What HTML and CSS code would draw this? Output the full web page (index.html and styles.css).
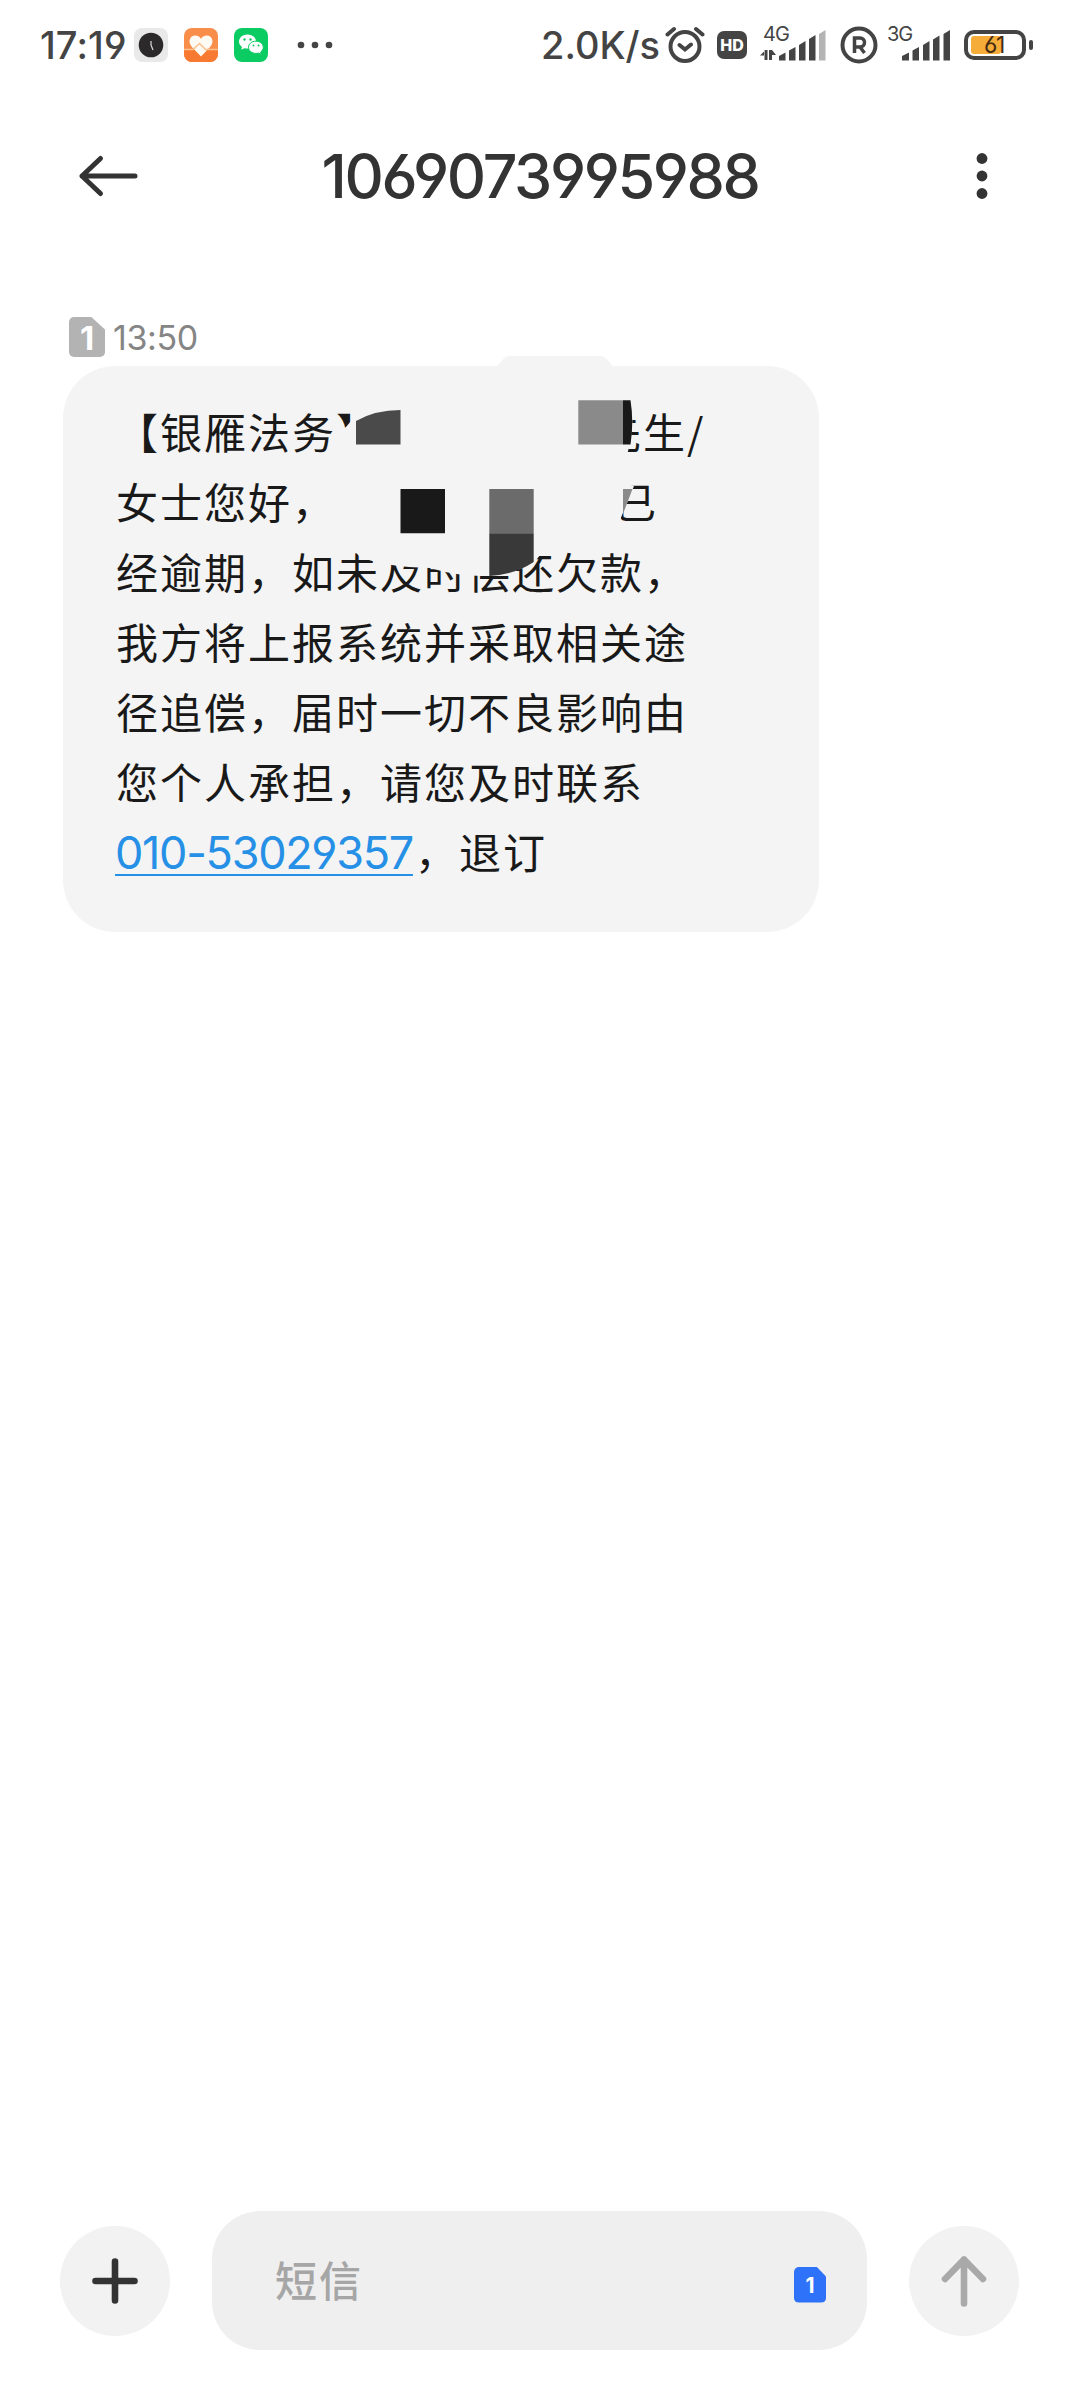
FILE: index.html
```html
<!DOCTYPE html>
<html lang="zh-CN">
<head>
    <meta charset="UTF-8">
    <title>短信</title>
    <link rel="stylesheet" href="styles.css">
</head>
<body>
    <div class="status-bar">
        <div class="status-left">
            <span class="clock">17:19</span>
            <svg class="app-icon" width="34" height="34" viewBox="0 0 34 34">
                <rect width="34" height="34" rx="8" fill="#e9e9e9"/>
                <circle cx="17" cy="17" r="12.3" fill="#2b2929"/>
                <path d="M17 13v4l2 5" stroke="#ddd" stroke-width="1.200" fill="none"/>
            </svg>
            <svg class="app-icon" width="34" height="34" viewBox="0 0 34 34">
                <rect width="34" height="34" rx="8" fill="#f98d4a"/>
                <path d="M0 21.500h34V26a8 8 0 0 1-8 8H8a8 8 0 0 1-8-8z" fill="#f87a32"/>
                <path d="M17 28.500L7.500 18.500C3.500 13.500 6 7.500 11 7.500c3 0 5 1.500 6 3.500 1-2 3-3.500 6-3.500 5 0 7.500 6 3.500 11z" fill="#fffaf3"/>
                <path d="M0 21.500h9l6.500-6 6 6H34" stroke="#fbc08f" stroke-width="1.500" fill="none"/>
            </svg>
            <svg class="app-icon" width="34" height="34" viewBox="0 0 34 34">
                <rect width="34" height="34" rx="8" fill="#0bcb63"/>
                <path d="M13.500 6.500C8.500 6.500 5 9.800 5 13.600c0 2.300 1.200 4.200 3 5.400l-.8 2.800 3.200-1.600c1 .3 2 .4 3.100.4 4.800 0 8.500-3 8.500-7s-3.700-7.100-8.500-7.100z" fill="#fff"/>
                <path d="M22 13.200c-4.300 0-7.500 2.700-7.500 6.100s3.200 6.100 7.500 6.100c.9 0 1.800-.1 2.600-.4l2.600 1.500-.6-2.500c1.700-1.200 2.700-2.800 2.700-4.700 0-3.400-3-6.100-7.300-6.100z" fill="#fff" stroke="#0bcb63"/>
                <g fill="#0bcb63">
                    <circle cx="10.500" cy="11.500" r="1.200"/><circle cx="16.500" cy="11.500" r="1.200"/>
                    <circle cx="19.500" cy="17.500" r="1"/><circle cx="24.500" cy="17.500" r="1"/>
                </g>
            </svg>
            <svg class="more-apps" width="36" height="8" viewBox="0 0 36 8" fill="#444">
                <circle cx="4" cy="4" r="3.300"/><circle cx="18" cy="4" r="3.300"/><circle cx="32" cy="4" r="3.300"/>
            </svg>
        </div>
        <div class="status-right">
            <span class="speed">2.0K/s</span>
            <svg class="alarm" width="40" height="38" viewBox="0 0 40 38" fill="none" stroke="#444" stroke-width="4" stroke-linecap="round">
                <circle cx="20" cy="20.500" r="14.500"/>
                <path d="M2.500 8.500L9 3M37.500 8.500L31 3M14.500 19l5.500 4.500 6-5"/>
            </svg>
            <span class="hd">HD</span>
            <div class="signal signal-4g">
                <span class="net">4G</span>
                <svg width="66" height="31" viewBox="0 0 66 31" fill="#444">
                    <path d="M4.500 20v10h3V20zM0 25.500l5-5v5zM9 20v10h3V20zM12 20v5h4z"/>
                    <path d="M19 26l6.500-3.500v8H19zM29 20.500l6.500-3.500v13.500H29zM39 15l6.500-4v19.500H39zM49 9l6.500-4v25.500H49z"/>
                    <path d="M59 4l6.500-4v30.500H59z" fill="#b4b4b4"/>
                </svg>
            </div>
            <svg class="roaming" width="38" height="38" viewBox="0 0 38 38" fill="none" stroke="#444">
                <circle cx="19" cy="19" r="16.500" stroke-width="4"/>
                <path d="M14.500 27V12h5.500a4.500 4.500 0 0 1 0 9h-5.500M20 21l4.500 6" stroke-width="3.500"/>
            </svg>
            <div class="signal signal-3g">
                <span class="net">3G</span>
                <svg width="48" height="31" viewBox="0 0 48 31" fill="#444">
                    <path d="M0 26l7-3.500v8H0zM10.500 20.500l6.500-3.500v13.500h-6.500zM21 15l6.500-4v19.500H21zM31 9.500l6.500-4v25H31zM41.500 4l6.500-4v30.500h-6.500z"/>
                </svg>
            </div>
            <div class="battery"><span class="battery-level"></span><span class="battery-text">61</span></div>
        </div>
    </div>

    <div class="header">
        <svg width="60" height="44" viewBox="0 0 60 44" fill="none" stroke="#333" stroke-width="5" stroke-linecap="round" stroke-linejoin="round">
            <path d="M22.500 4.500L4 22l18.500 17.500M4 22h53"/>
        </svg>
        <h1>1069073995988</h1>
        <svg width="12" height="46" viewBox="0 0 12 46" fill="#333">
            <circle cx="6" cy="5.500" r="5.400"/><circle cx="6" cy="23" r="5.400"/><circle cx="6" cy="40.500" r="5.400"/>
        </svg>
    </div>

    <div class="messages">
        <div class="meta">
            <span class="sim">1</span>
            <span class="time">13:50</span>
        </div>
        <div class="bubble">
            <p>【银雁法务】<span class="gap gap-name"></span>先生/</p>
            <p>女士您好，<span class="gap gap-debt"></span>已</p>
            <p>经逾期，如未及时偿还欠款，</p>
            <p>我方将上报系统并采取相关途</p>
            <p>径追偿，届时一切不良影响由</p>
            <p>您个人承担，请您及时联系</p>
            <p><a class="phone">010-53029357</a>，退订</p>
            <!-- mosaic brush over the private part -->
            <svg class="mosaic" width="757" height="576" viewBox="63 356 757 576">
                <path fill="#f4f4f4" d="M496 367c5-4 7-11 14-11h90c7 0 9 7 14 11z"/>
                <path fill="#f4f4f4" d="M351 405V421L346 427 332 435V468L325 520 360 557Q385 567 430 568Q460 577 489 576Q515 573 534 563L543 551 600 538 620 520 634 486 612 480 627 455Q636 425 630 396H400z"/>
                <path fill="#4a4a4a" d="M356 444.500V421Q375 410 400.500 410V444.500z"/>
                <path fill="#8a8a8a" d="M578.300 400.300H623V444.500H578.300zM623 489h9.500L623 514z"/>
                <path fill="#191919" d="M623 400.300h7.500Q634 422 630.500 444.500H623zM400.500 489H445v44.300H400.500z"/>
                <path fill="#6b6b6b" d="M489.300 489h44.400v44.300H489.300z"/>
                <path fill="#393939" d="M489.300 533.300h44.400V562Q514 575 489.300 576z"/>
            </svg>
        </div>
    </div>

    <div class="composer">
        <div class="round-btn">
            <svg width="54" height="54" viewBox="0 0 54 54" stroke="#333" stroke-width="6.600" stroke-linecap="round">
                <path d="M27 7.500v39M7.500 27h39"/>
            </svg>
        </div>
        <div class="input">
            <span class="placeholder">短信</span>
            <span class="sim sim-blue">1</span>
        </div>
        <div class="round-btn">
            <svg width="54" height="54" viewBox="0 0 54 54" fill="none" stroke="#a9a9a9" stroke-width="6.600" stroke-linecap="round" stroke-linejoin="round">
                <path d="M27 49.500V5.500M8 25L27 5.500 46 25"/>
            </svg>
        </div>
    </div>
</body>
</html>
```

FILE: styles.css
```css
* {
    box-sizing: border-box;
}
body {
    display: flex;
    flex-direction: column;
    height: 2400px;
    margin: 0;
    background-color: #fff;
    color: #191919;
    font-family: Inter, "Noto Sans CJK SC", sans-serif;
    font-feature-settings: "cv03", "cv04";
}
svg {
    display: block;
    flex: none;
}
.status-bar {
    display: flex;
    justify-content: space-between;
    height: 90px;
    padding: 0 47px 0 40px;
    color: #444;
}
.status-left,
.status-right {
    display: flex;
    align-items: center;
}
.clock,
.speed {
    font-size: 38px;
    font-weight: 500;
    white-space: nowrap;
}
.clock {
    width: 94px;
    letter-spacing: 0.1px;
}
.app-icon {
    margin-right: 16px;
}
.more-apps {
    margin-left: 13px;
}
.speed {
    width: 124px;
}
.alarm {
    margin-right: 12px;
}
.hd {
    width: 30px;
    height: 28px;
    margin-right: 13px;
    border-radius: 7px;
    background: #444;
    color: #fff;
    font-size: 16px;
    font-weight: 800;
    line-height: 28px;
    text-align: center;
}
.signal {
    position: relative;
    display: flex;
    align-items: flex-end;
    height: 31px;
}
.signal-4g {
    width: 66px;
    margin-right: 14px;
}
.signal-3g {
    width: 63px;
    margin-right: 14px;
    justify-content: flex-end;
}
.net {
    position: absolute;
    left: 3px;
    top: -8px;
    font-size: 20px;
    letter-spacing: -1px;
    line-height: 24px;
}
.signal-3g .net {
    left: 0;
}
.roaming {
    margin-right: 9px;
}
.battery {
    position: relative;
    width: 62px;
    height: 30px;
    margin-right: 7px;
    padding: 2px 3px;
    border: 4px solid #444;
    border-radius: 10px;
    color: #442a10;
    font-size: 23px;
    line-height: 22px;
}
.battery::after {
    content: "";
    position: absolute;
    right: -11px;
    top: 6px;
    width: 4px;
    height: 10px;
    border-radius: 2px;
    background: #444;
}
.battery-level {
    display: block;
    width: 30px;
    height: 18px;
    border-radius: 3px;
    background: #f5ac38;
}
.battery-text {
    position: absolute;
    left: 16px;
    top: 0;
    letter-spacing: -1.5px;
}
.header {
    display: grid;
    grid-template-columns: 60px 1fr 60px;
    align-items: center;
    height: 172px;
    padding: 0 78px;
}
.header svg:last-child {
    margin-left: 34px;
}
.header h1 {
    margin: 0;
    color: #333;
    font-size: 61px;
    font-weight: 500;
    letter-spacing: -2.4px;
    text-align: center;
}
.messages {
    flex: 1;
    padding: 55px 63px 0;
}
.meta {
    display: flex;
    align-items: center;
    gap: 8px;
    height: 40px;
    margin: 0 0 9px 6px;
    color: #858585;
    font-size: 34px;
    letter-spacing: -0.4px;
}
.sim {
    width: 36px;
    height: 40px;
    border-radius: 5px;
    background: #b3b3b3;
    clip-path: polygon(0 0, 62% 0, 100% 31%, 100% 100%, 0 100%);
    color: #fff;
    font-size: 33px;
    font-weight: 700;
    line-height: 43px;
    text-align: center;
}
.bubble {
    position: relative;
    width: 756px;
    height: 566px;
    padding: 30px 52px 0 53px;
    border-radius: 52px;
    background: #f4f4f4;
}
.bubble p {
    height: 70px;
    margin: 0;
    font-family: "Noto Sans CJK SC", sans-serif;
    font-size: 42px;
    letter-spacing: 2px;
    line-height: 70px;
    white-space: nowrap;
}
.gap {
    display: inline-block;
}
.gap-name {
    width: 219px;
}
.gap-debt {
    width: 278px;
}
.phone {
    margin: 0 2px 0 -1px;
    color: #2590e6;
    font-family: Inter, sans-serif;
    font-size: 45px;
    letter-spacing: -1.3px;
    text-decoration: underline;
    text-decoration-thickness: 2px;
    text-underline-offset: 5px;
}
.mosaic {
    position: absolute;
    left: 0;
    top: -10px;
}
.composer {
    display: flex;
    align-items: center;
    justify-content: space-between;
    padding: 0 61px 50px 60px;
}
.round-btn {
    display: flex;
    align-items: center;
    justify-content: center;
    width: 110px;
    height: 110px;
    border-radius: 50%;
    background: #f2f2f2;
}
.input {
    display: flex;
    align-items: center;
    justify-content: space-between;
    width: 655px;
    height: 139px;
    padding: 0 41px 0 63px;
    border-radius: 48px;
    background: #efefef;
}
.placeholder {
    margin-bottom: 5px;
    color: #a6a6a6;
    font-family: "Noto Sans CJK SC", sans-serif;
    font-size: 42px;
    font-weight: 500;
    letter-spacing: 2px;
}
.sim-blue {
    height: 36px;
    width: 32px;
    margin-top: 8px;
    background: #2d72f8;
    clip-path: polygon(0 0, 70% 0, 100% 28%, 100% 100%, 0 100%);
    font-size: 21px;
    line-height: 38px;
}
```
